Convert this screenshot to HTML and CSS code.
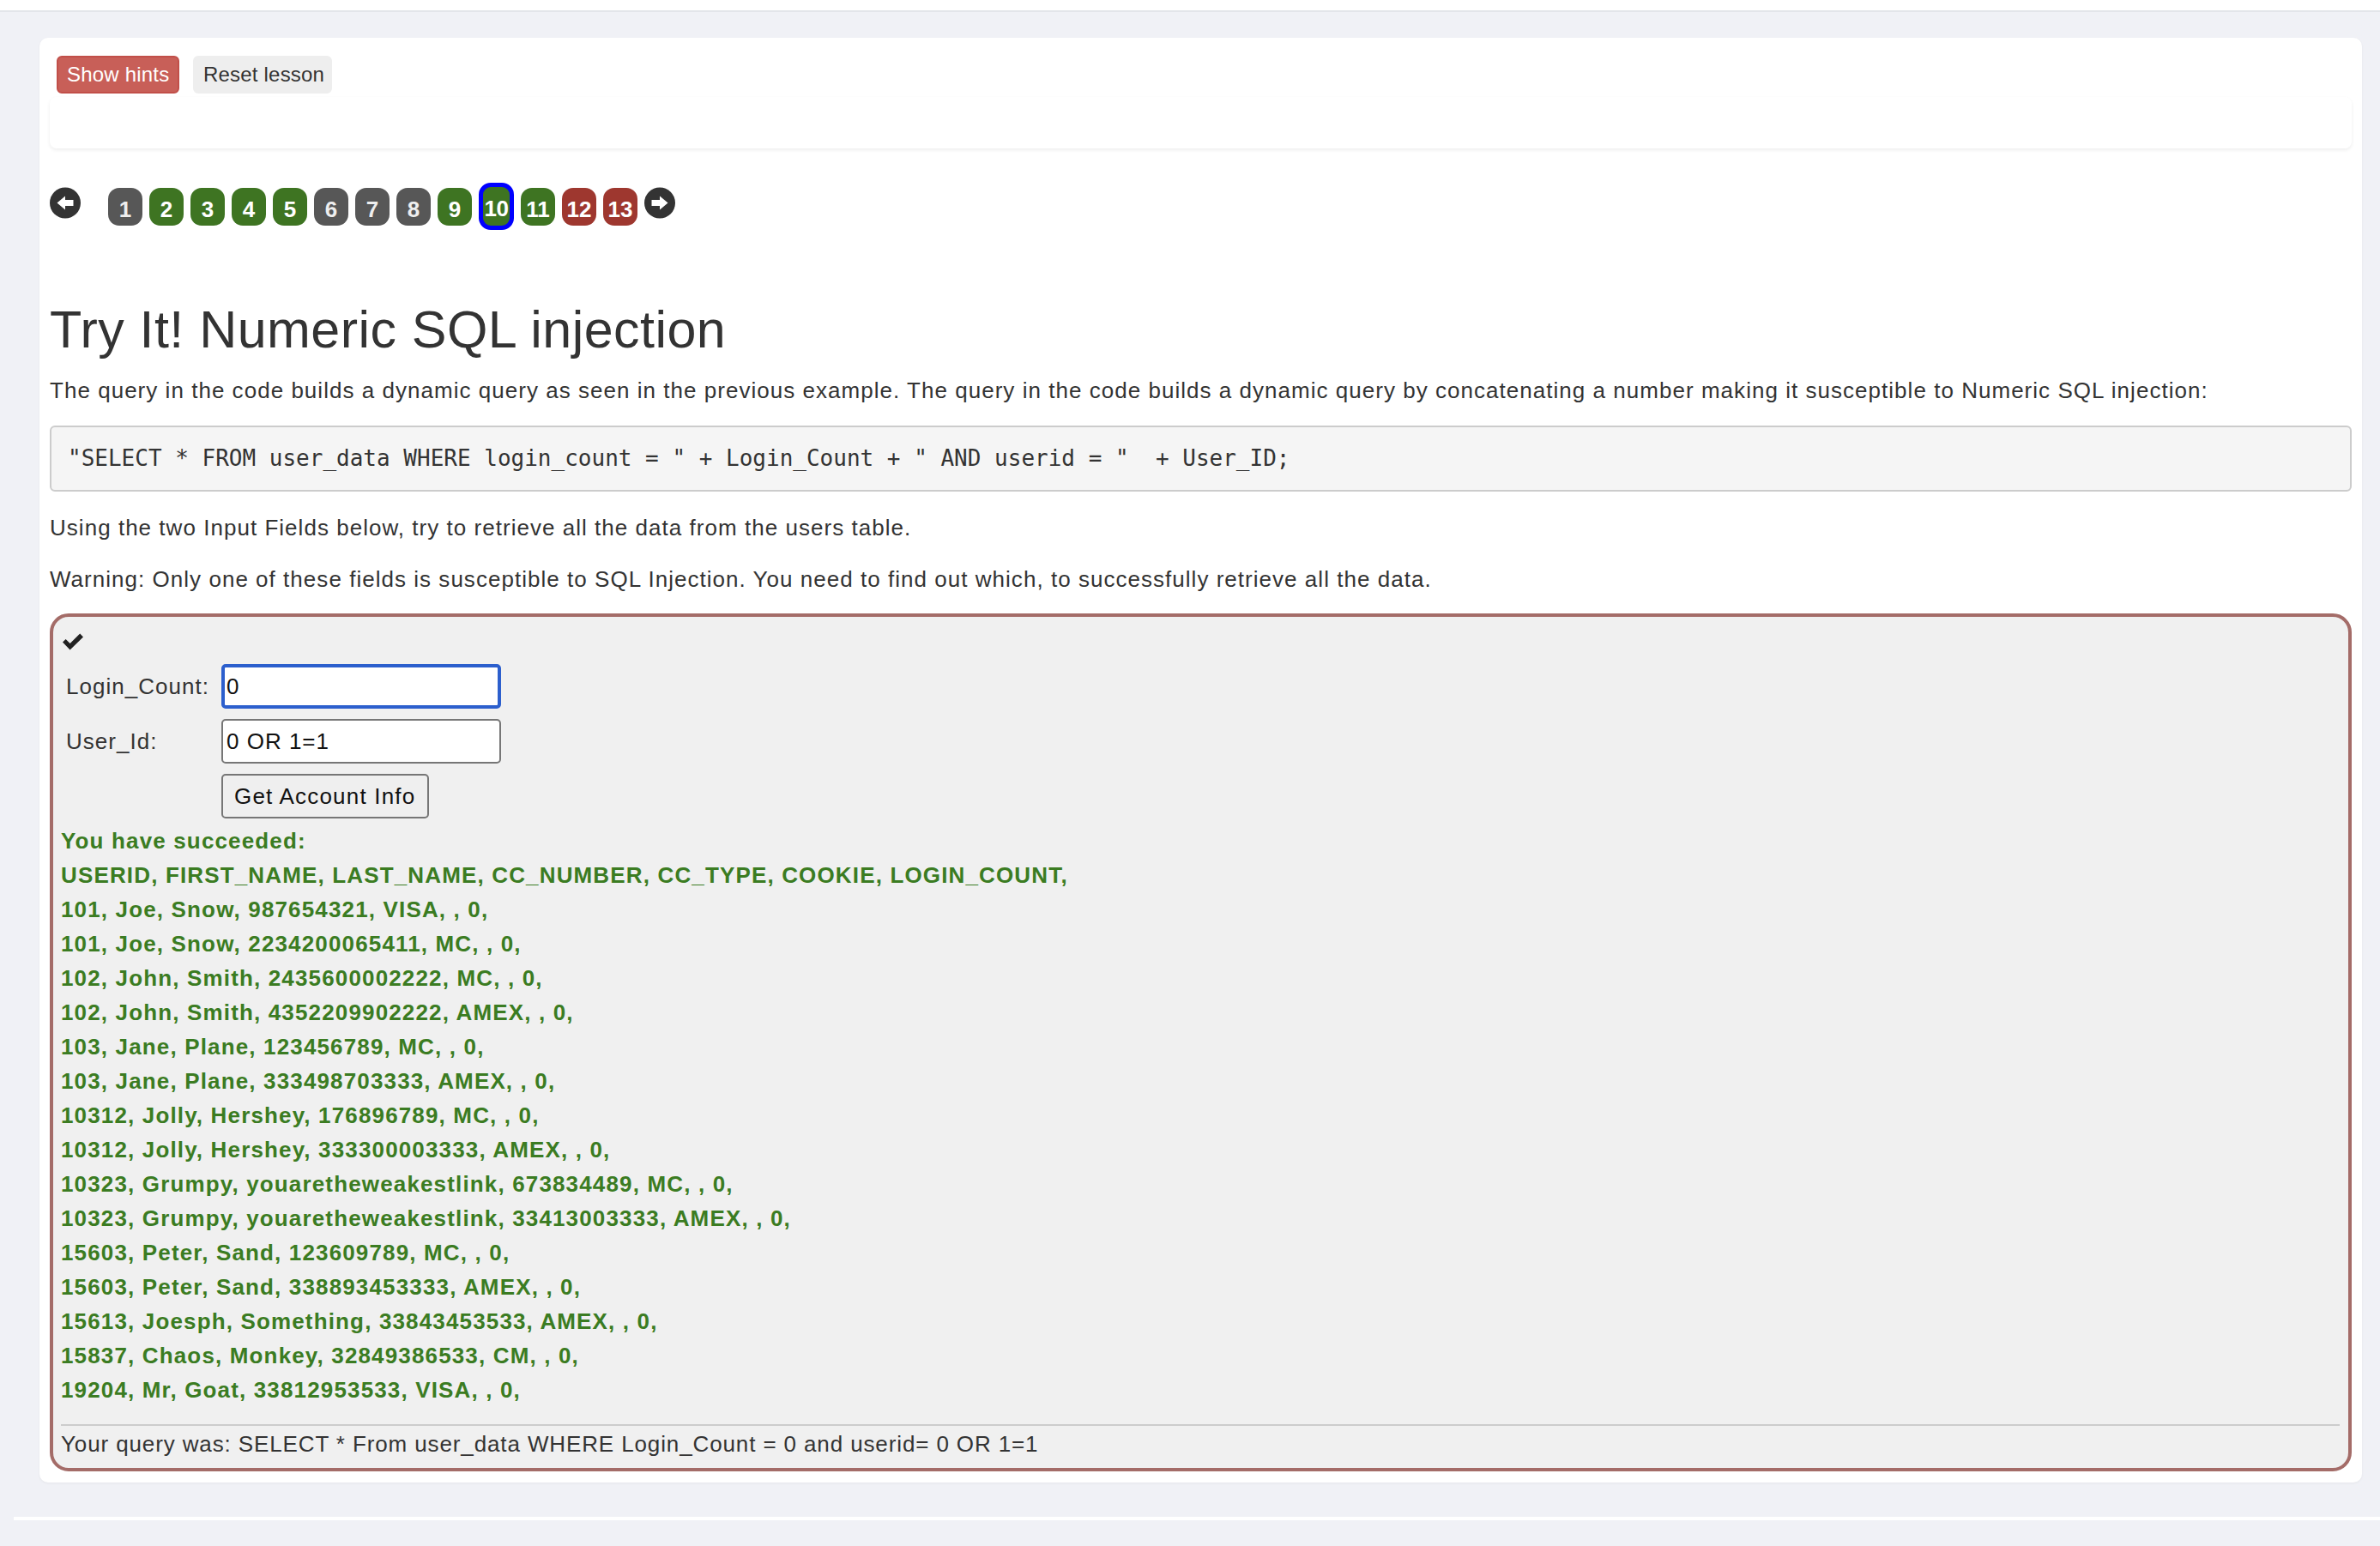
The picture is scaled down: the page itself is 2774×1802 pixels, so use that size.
FILE: index.html
```html
<!DOCTYPE html>
<html lang="en">
<head>
<meta charset="utf-8">
<title>SQL Injection (intro)</title>
<link rel="stylesheet" href="styles.css">
</head>
<body>
<div class="topbar"></div>
<main class="card">
  <div class="lesson-actions">
    <button class="btn btn-danger">Show hints</button>
    <button class="btn btn-default">Reset lesson</button>
  </div>
  <div class="hints"></div>

  <nav class="pager">
    <svg class="arrow prev" viewBox="0 0 36 37" aria-hidden="true"><circle cx="18" cy="18.5" r="18" fill="#333"/><path d="M8.5 18.5 L18 10.5 L18 15 L27.5 15 L27.5 22 L18 22 L18 26.5 Z" fill="#fff"/></svg>
    <span class="page gray">1</span>
    <span class="page green">2</span>
    <span class="page green">3</span>
    <span class="page green">4</span>
    <span class="page green">5</span>
    <span class="page gray">6</span>
    <span class="page gray">7</span>
    <span class="page gray">8</span>
    <span class="page green">9</span>
    <span class="page green active">10</span>
    <span class="page green">11</span>
    <span class="page red">12</span>
    <span class="page red">13</span>
    <svg class="arrow next" viewBox="0 0 36 37" aria-hidden="true"><circle cx="18" cy="18.5" r="18" fill="#333"/><path d="M27.5 18.5 L18 10.5 L18 15 L8.5 15 L8.5 22 L18 22 L18 26.5 Z" fill="#fff"/></svg>
  </nav>

  <h2 class="title">Try It! Numeric SQL injection</h2>
  <p>The query in the code builds a dynamic query as seen in the previous example. The query in the code builds a dynamic query by concatenating a number making it susceptible to Numeric SQL injection:</p>
  <pre class="code">"SELECT * FROM user_data WHERE login_count = " + Login_Count + " AND userid = "  + User_ID;</pre>
  <p>Using the two Input Fields below, try to retrieve all the data from the users table.</p>
  <p>Warning: Only one of these fields is susceptible to SQL Injection. You need to find out which, to successfully retrieve all the data.</p>

  <section class="attack">
    <svg class="check" viewBox="0 0 24 18" aria-hidden="true"><polygon points="0,9.5 3.6,6 8.6,11 20.2,-0.4 24,3.4 8.6,18.4" fill="#222"/></svg>
    <form class="attack-form">
      <div class="row">
        <label class="lbl" for="lc">Login_Count:</label>
        <input id="lc" class="field focused" type="text" value="0">
      </div>
      <div class="row">
        <label class="lbl" for="uid">User_Id:</label>
        <input id="uid" class="field" type="text" value="0 OR 1=1">
      </div>
      <div class="row">
        <span class="lbl"></span>
        <button type="button" class="submit">Get Account Info</button>
      </div>
    </form>
    <div class="output">
      <div>You have succeeded:</div>
      <div>USERID, FIRST_NAME, LAST_NAME, CC_NUMBER, CC_TYPE, COOKIE, LOGIN_COUNT, </div>
      <div>101, Joe, Snow, 987654321, VISA, , 0, </div>
      <div>101, Joe, Snow, 2234200065411, MC, , 0, </div>
      <div>102, John, Smith, 2435600002222, MC, , 0, </div>
      <div>102, John, Smith, 4352209902222, AMEX, , 0, </div>
      <div>103, Jane, Plane, 123456789, MC, , 0, </div>
      <div>103, Jane, Plane, 333498703333, AMEX, , 0, </div>
      <div>10312, Jolly, Hershey, 176896789, MC, , 0, </div>
      <div>10312, Jolly, Hershey, 333300003333, AMEX, , 0, </div>
      <div>10323, Grumpy, youaretheweakestlink, 673834489, MC, , 0, </div>
      <div>10323, Grumpy, youaretheweakestlink, 33413003333, AMEX, , 0, </div>
      <div>15603, Peter, Sand, 123609789, MC, , 0, </div>
      <div>15603, Peter, Sand, 338893453333, AMEX, , 0, </div>
      <div>15613, Joesph, Something, 33843453533, AMEX, , 0, </div>
      <div>15837, Chaos, Monkey, 32849386533, CM, , 0, </div>
      <div>19204, Mr, Goat, 33812953533, VISA, , 0, </div>
    </div>
    <hr class="sep">
    <div class="query">Your query was: SELECT * From user_data WHERE Login_Count = 0 and userid= 0 OR 1=1</div>
  </section>
</main>
<div class="footer"></div>
</body>
</html>
```
FILE: styles.css
```css
html {
  background: #f0f1f6;
}
body {
  margin: 0;
  background: #f0f1f6;
  font-family: "Liberation Sans", Arial, Helvetica, sans-serif;
  font-size: 26px;
  line-height: 40px;
  letter-spacing: 1.03px;
  color: #333;
}
.topbar {
  height: 12px;
  background: #fff;
  border-bottom: 2px solid #e3e5ea;
}
.card {
  display: block;
  margin: 30px 21px 0 46px;
  padding: 21px 12px 13px;
  background: #fff;
  border-radius: 10px;
  box-shadow: 0 1px 3px rgba(0, 0, 0, 0.05);
}
.lesson-actions {
  display: flex;
  gap: 16px;
  padding-left: 8px;
  height: 44px;
}
.btn {
  box-sizing: border-box;
  height: 44px;
  padding: 0 10px;
  display: flex;
  align-items: center;
  font-family: "Liberation Sans", Arial, sans-serif;
  font-size: 24px;
  letter-spacing: 0.2px;
  border-radius: 6px;
  white-space: nowrap;
}
.btn-danger {
  width: 143px;
  background: #c85f58;
  border: 2px solid #c14f49;
  color: #fff;
}
.btn-default {
  width: 162px;
  background: #eeeeee;
  border: 2px solid #eeeeee;
  color: #333;
}
.hints {
  margin-top: 4px;
  height: 60px;
  border-radius: 8px;
  background: #fff;
  box-shadow: 0 2px 4px rgba(0, 0, 0, 0.07);
}
.pager {
  display: flex;
  align-items: flex-start;
  margin-top: 40px;
  height: 55px;
  letter-spacing: 0;
}
.arrow {
  display: block;
  width: 36px;
  height: 37px;
  margin-top: 5px;
}
.arrow.prev {
  margin-right: 32px;
}
.page {
  box-sizing: border-box;
  width: 40px;
  height: 44px;
  margin-top: 6px;
  margin-right: 8px;
  padding-top: 5px;
  border-radius: 13px;
  display: flex;
  justify-content: center;
  align-items: center;
  font-size: 26px;
  line-height: 1;
  font-weight: bold;
  color: #fff;
}
.page.gray {
  background: #575757;
  color: #eee;
}
.page.green {
  background: #3e7422;
}
.page.red {
  background: #9e372f;
}
.page.active {
  width: 41px;
  height: 55px;
  margin-top: 0;
  border: 5px solid #0000ff;
  border-radius: 14px;
  padding-top: 5px;
  letter-spacing: -0.5px;
}
.title {
  margin: 83px 0 17px;
  font-size: 61px;
  line-height: 67px;
  font-weight: normal;
  letter-spacing: 0.45px;
  color: #333;
}
p {
  margin: 0 0 20px;
}
.code {
  margin: 21px 0 22px;
  padding: 19px;
  border: 2px solid #ccc;
  border-radius: 6px;
  background: #f5f5f5;
  font-family: "DejaVu Sans Mono", "Liberation Mono", monospace;
  font-size: 26px;
  line-height: 35px;
  letter-spacing: 0;
  color: #333;
  white-space: pre;
}
.attack {
  display: block;
  border: 4px solid #a46c68;
  border-radius: 22px;
  background: #f0f0f0;
  padding: 20px 10px 8px 9px;
}
.check {
  display: block;
  width: 24px;
  height: 18px;
  margin-left: 2px;
  overflow: visible;
}
.attack-form {
  margin: 17px 0 0;
}
.row {
  display: flex;
  align-items: center;
  height: 52px;
  margin-bottom: 12px;
}
.row:last-child {
  margin-bottom: 0;
}
.lbl {
  box-sizing: border-box;
  width: 187px;
  padding-left: 6px;
  color: #333;
}
.field {
  box-sizing: border-box;
  width: 326px;
  height: 52px;
  padding: 0 4px;
  border: 2px solid #767676;
  border-radius: 5px;
  background: #fff;
  font-family: "Liberation Sans", Arial, sans-serif;
  font-size: 26px;
  letter-spacing: 1px;
  color: #111;
  outline: none;
}
.field.focused {
  border: 4px solid #2c5fcd;
  padding: 0 2px;
}
.submit {
  box-sizing: border-box;
  width: 242px;
  height: 52px;
  padding: 0 13px;
  border: 2px solid #767676;
  border-radius: 5px;
  background: #efefef;
  font-family: "Liberation Sans", Arial, sans-serif;
  font-size: 26px;
  letter-spacing: 1.2px;
  color: #111;
  text-align: left;
}
.output {
  margin-top: 6px;
  font-weight: bold;
  letter-spacing: 1.15px;
  color: #3b7c22;
}
.sep {
  margin: 20px 0 1px;
  border: 0;
  height: 2px;
  background: #ccc;
}
.query {
  letter-spacing: 0.88px;
  color: #333;
}
.footer {
  margin: 40px 0 0 16px;
  height: 4px;
  background: #fff;
}
```
